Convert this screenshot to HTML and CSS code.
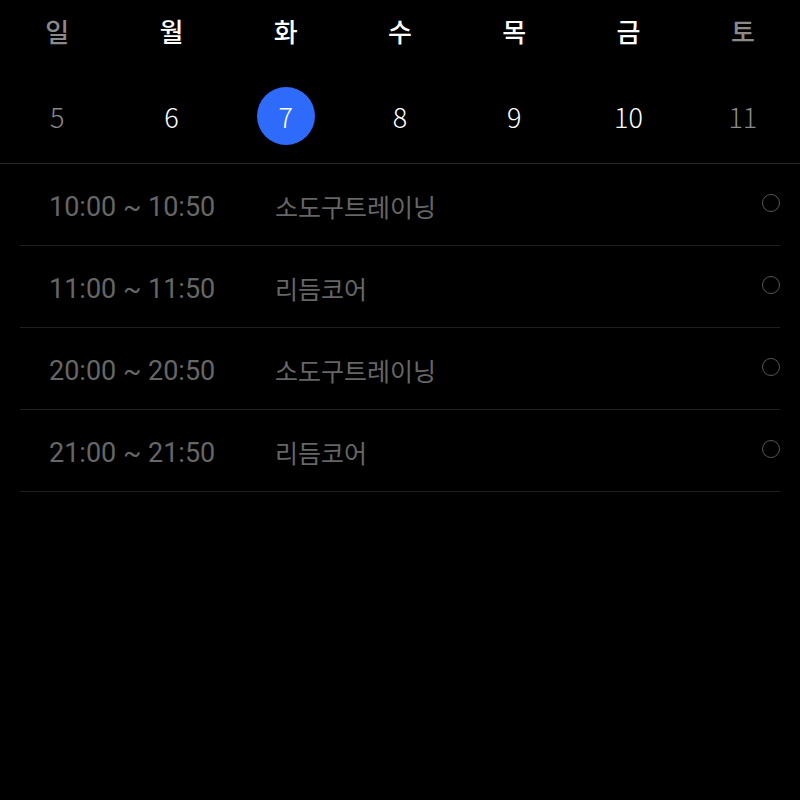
FILE: index.html
```html
<!DOCTYPE html>
<html lang="ko">
<head>
<meta charset="utf-8">
<link rel="stylesheet" href="styles.css">
</head>
<body>
<div class="app">
  <div class="week">
    <div class="row names">
      <div class="cell muted">일</div>
      <div class="cell">월</div>
      <div class="cell">화</div>
      <div class="cell">수</div>
      <div class="cell">목</div>
      <div class="cell">금</div>
      <div class="cell muted">토</div>
    </div>
    <div class="row dates">
      <div class="cell"><span class="num muted">5</span></div>
      <div class="cell"><span class="num">6</span></div>
      <div class="cell"><span class="num active">7</span></div>
      <div class="cell"><span class="num">8</span></div>
      <div class="cell"><span class="num">9</span></div>
      <div class="cell"><span class="num">10</span></div>
      <div class="cell"><span class="num muted">11</span></div>
    </div>
  </div>
  <ul class="list">
    <li class="item"><span class="time">10:00 ~ 10:50</span><span class="title">소도구트레이닝</span><span class="radio"></span></li>
    <li class="item"><span class="time">11:00 ~ 11:50</span><span class="title">리듬코어</span><span class="radio"></span></li>
    <li class="item"><span class="time">20:00 ~ 20:50</span><span class="title">소도구트레이닝</span><span class="radio"></span></li>
    <li class="item"><span class="time">21:00 ~ 21:50</span><span class="title">리듬코어</span><span class="radio"></span></li>
  </ul>
</div>
</body>
</html>
```
FILE: styles.css
```css
html, body {
  margin: 0;
  padding: 0;
  background: #000;
}
.app {
  width: 800px;
  height: 800px;
  background: #000;
  font-family: "Noto Sans CJK KR", "Noto Sans", sans-serif;
  color: #fff;
}
.week {
  height: 164px;
  border-bottom: 1px solid #262626;
  box-sizing: border-box;
}
.row {
  display: grid;
  grid-template-columns: repeat(7, 1fr);
}
.cell {
  display: flex;
  justify-content: center;
  align-items: center;
}
.names {
  height: 60px;
  font-size: 26px;
  font-weight: 500;
}
.dates {
  padding-top: 27px;
}
.dates .cell {
  align-items: flex-start;
}
.num {
  width: 58px;
  height: 58px;
  border-radius: 50%;
  display: flex;
  align-items: center;
  justify-content: center;
  font-size: 27px;
  font-weight: 300;
}
.num.active {
  background: #2e6bfb;
}
.muted {
  color: #8a8a8a;
}
.list {
  list-style: none;
  margin: 0;
  padding: 0 20px;
}
.item {
  height: 81px;
  border-bottom: 1px solid #1f1f1f;
  display: flex;
  align-items: center;
  color: #666;
}
.time {
  font-family: Roboto, "Noto Sans", sans-serif;
  font-size: 27px;
  width: 226px;
  padding-left: 29px;
  padding-top: 5px;
}
.title {
  font-size: 25px;
  flex: 1;
  padding-top: 3px;
}
.radio {
  width: 16px;
  height: 16px;
  border: 1.5px solid #555;
  border-radius: 50%;
  align-self: flex-start;
  margin-top: 30px;
}
```
